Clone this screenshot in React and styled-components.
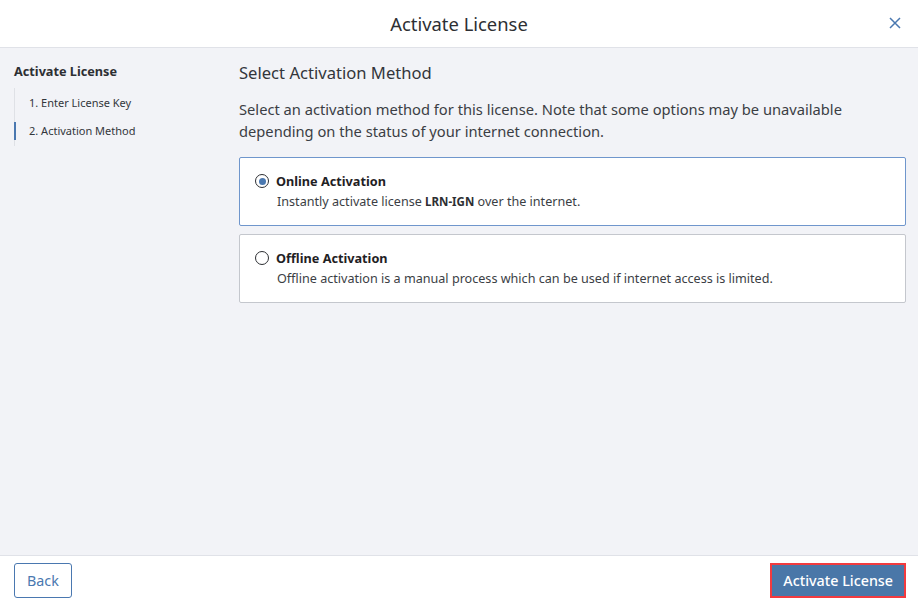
import React, { useState } from 'react'
import styled, { createGlobalStyle } from 'styled-components'

const GlobalStyle = createGlobalStyle`
  html, body { margin: 0; padding: 0; height: 100%; }
  body { font-family: "Noto Sans", "Open Sans", sans-serif; background: #f2f3f7; }
  #root { height: 100%; }
`

const Dialog = styled.div`
  display: flex;
  flex-direction: column;
  width: 918px;
  height: 603px;
  background: #f2f3f7;
  color: #2d2f33;
`

const Header = styled.div`
  position: relative;
  display: flex;
  align-items: center;
  justify-content: center;
  height: 47px;
  background: #fff;
  border-bottom: 1px solid #e0e2e8;
  flex-shrink: 0;
`

const Title = styled.h1`
  margin: 0;
  font-size: 18.4px;
  font-weight: 400;
  color: #2d2f33;
`

const Close = styled.button`
  position: absolute;
  right: 14px;
  top: 14px;
  width: 18px;
  height: 18px;
  padding: 0;
  border: none;
  background: none;
  cursor: pointer;
  display: flex;
  align-items: center;
  justify-content: center;
`

const Body = styled.div`
  flex: 1;
  display: flex;
`

const Sidebar = styled.nav`
  width: 225px;
  padding: 14px 0 0 14px;
  box-sizing: border-box;
  flex-shrink: 0;
`

const SideTitle = styled.div`
  font-size: 12.7px;
  font-weight: 700;
  color: #2d2f33;
  margin-bottom: 8px;
`

const Steps = styled.div`
  display: flex;
  flex-direction: column;
  border-left: 1px solid #dfe1e6;
  padding: 1px 0;
`

const Step = styled.div`
  position: relative;
  font-size: 11px;
  color: #33363b;
  padding: 6px 0 6px 14px;
  line-height: 16px;

  &::before {
    content: '';
    position: absolute;
    left: -1px;
    top: 5px;
    bottom: 5px;
    width: 2px;
    background: ${p => (p.$active ? '#4a78b0' : 'transparent')};
  }
`

const Main = styled.main`
  flex: 1;
  padding: 13px 12px 0 14px;
`

const Heading = styled.h2`
  margin: 0;
  font-size: 16.6px;
  font-weight: 400;
  color: #33363b;
  line-height: 23px;
`

const Intro = styled.p`
  margin: 14px 0 15px;
  font-size: 14.7px;
  line-height: 22px;
  color: #3b3e44;
`

const Options = styled.div`
  display: flex;
  flex-direction: column;
  gap: 8px;
`

const Option = styled.label`
  display: flex;
  flex-direction: column;
  background: #fff;
  border: 1px solid ${p => (p.$selected ? '#6f96cc' : '#c4c7cd')};
  border-radius: 2px;
  padding: 14px 16px 15px 15px;
  cursor: pointer;
`

const OptionHead = styled.div`
  display: flex;
  align-items: center;
  gap: 7px;
`

const Radio = styled.span`
  width: 14px;
  height: 14px;
  border-radius: 50%;
  border: 1.5px solid #2d2f33;
  box-sizing: border-box;
  display: flex;
  align-items: center;
  justify-content: center;

  &::after {
    content: '';
    width: 7px;
    height: 7px;
    border-radius: 50%;
    background: ${p => (p.$checked ? '#4a78b0' : 'transparent')};
  }
`

const OptionTitle = styled.span`
  font-size: 12.7px;
  font-weight: 700;
  color: #1f2124;
  line-height: 18px;
`

const OptionDesc = styled.div`
  font-size: 12.6px;
  color: #3b3e44;
  padding-left: 22px;
  margin-top: 3px;
  line-height: 17px;

  b {
    font-weight: 700;
    color: #2d2f33;
    font-size: 11.5px;
  }
`

const Footer = styled.div`
  height: 47px;
  background: #fff;
  border-top: 1px solid #e0e2e8;
  display: flex;
  align-items: center;
  justify-content: space-between;
  padding: 0 12px 0 14px;
  flex-shrink: 0;
`

const Button = styled.button`
  font-family: inherit;
  font-size: 14.3px;
  height: 35px;
  padding: 0 ${p => (p.$primary ? '10px' : '12px')};
  border-radius: 3px;
  cursor: pointer;
  margin-top: 1px;
  color: ${p => (p.$primary ? '#fff' : '#4a78b0')};
  background: ${p => (p.$primary ? '#4a77a8' : '#fff')};
  border: 1px solid ${p => (p.$primary ? '#4a77a8' : '#4a78b0')};
  ${p => p.$primary && `
    border-radius: 0;
    box-shadow: 0 0 0 2px #f23b3f;
    font-weight: 500;
    height: 31px;
    margin-right: 2px;
  `}
`

const options = [
  {
    id: 'online',
    title: 'Online Activation',
    desc: (
      <>
        Instantly activate license <b>LRN-IGN</b> over the internet.
      </>
    ),
  },
  {
    id: 'offline',
    title: 'Offline Activation',
    desc: 'Offline activation is a manual process which can be used if internet access is limited.',
  },
]

export default function App() {
  const [method, setMethod] = useState('online')

  return (
    <>
      <GlobalStyle />
      <Dialog>
        <Header>
          <Title>Activate License</Title>
          <Close aria-label="Close">
            <svg width="12" height="12" viewBox="0 0 12 12">
              <path d="M1 1L11 11M11 1L1 11" stroke="#4a78b0" strokeWidth="1.5" fill="none" />
            </svg>
          </Close>
        </Header>
        <Body>
          <Sidebar>
            <SideTitle>Activate License</SideTitle>
            <Steps>
              <Step>1. Enter License Key</Step>
              <Step $active>2. Activation Method</Step>
            </Steps>
          </Sidebar>
          <Main>
            <Heading>Select Activation Method</Heading>
            <Intro>
              Select an activation method for this license. Note that some options may be unavailable
              depending on the status of your internet connection.
            </Intro>
            <Options>
              {options.map(o => (
                <Option key={o.id} $selected={method === o.id} onClick={() => setMethod(o.id)}>
                  <OptionHead>
                    <Radio $checked={method === o.id} />
                    <OptionTitle>{o.title}</OptionTitle>
                  </OptionHead>
                  <OptionDesc>{o.desc}</OptionDesc>
                </Option>
              ))}
            </Options>
          </Main>
        </Body>
        <Footer>
          <Button>Back</Button>
          <Button $primary>Activate License</Button>
        </Footer>
      </Dialog>
    </>
  )
}
